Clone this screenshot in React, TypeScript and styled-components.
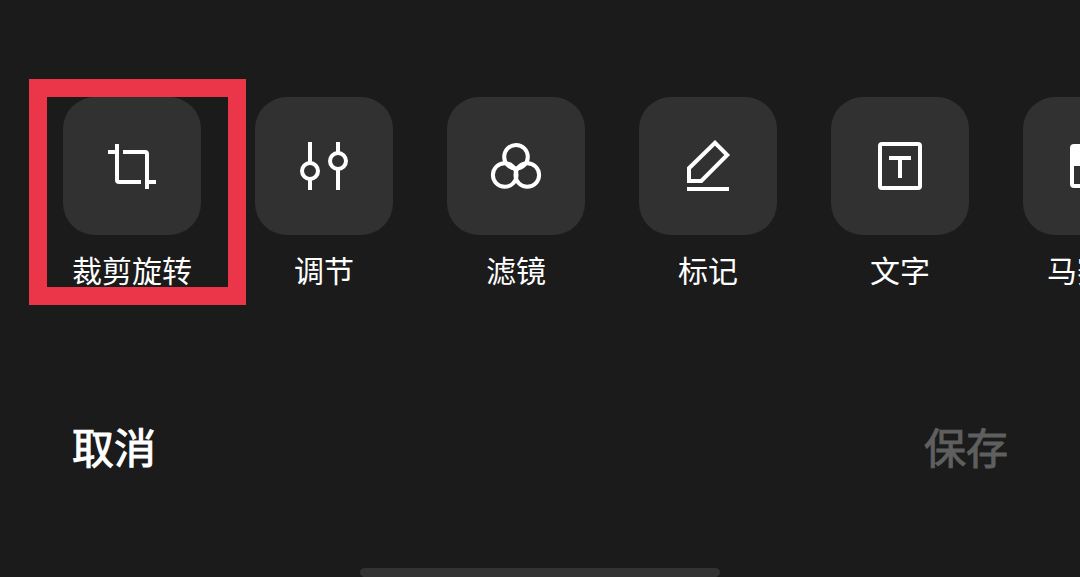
import React from "react";
import styled, { createGlobalStyle } from "styled-components";

const GlobalStyle = createGlobalStyle`
  *, *::before, *::after { box-sizing: border-box; }
  body {
    margin: 0;
    background: #1b1b1b;
    color: #fff;
    font-family: "Noto Sans CJK SC", "Noto Sans", sans-serif;
  }
`;

const Editor = styled.main`
  display: flex;
  flex-direction: column;
  overflow: hidden;
`;

const Toolbar = styled.nav`
  display: flex;
  gap: 54px;
  padding: 97px 63px 64px;
  overflow-x: auto;
  scrollbar-width: none;
`;

const Tool = styled.button`
  position: relative;
  flex: none;
  display: flex;
  flex-direction: column;
  align-items: center;
  gap: 16px;
  width: 138px;
  padding: 0;
  border: 0;
  background: none;
  color: inherit;
  font: inherit;
  cursor: pointer;
`;

const Tile = styled.span`
  display: flex;
  align-items: center;
  justify-content: center;
  width: 100%;
  aspect-ratio: 1;
  border-radius: 32px;
  background: #313131;
`;

const Label = styled.span`
  font-size: 30px;
  line-height: 36px;
  white-space: nowrap;
`;

const Highlight = styled.span`
  position: absolute;
  inset: -18px -45px -18px -34px;
  border: 18px solid #eb3549;
  pointer-events: none;
`;

const Icon = styled.svg`
  width: 64px;
  height: 64px;
  fill: none;
  stroke: #fff;
  stroke-width: 4;
`;

const Actions = styled.footer`
  display: flex;
  justify-content: space-between;
  padding: 65px 72px 92px;
`;

const Action = styled.button`
  padding: 0;
  border: 0;
  background: none;
  color: #fff;
  font: inherit;
  font-size: 42px;
  font-weight: 400;
  line-height: 60px;
  -webkit-text-stroke: 1px currentColor;
  cursor: pointer;

  &:disabled {
    color: #5f5f5f;
    cursor: default;
  }
`;

const HomeIndicator = styled.div`
  align-self: center;
  width: 33.3333%;
  height: 9px;
  border-radius: 5px;
  background: #333;
`;

const tools = [
  {
    label: "裁剪旋转",
    highlighted: true,
    icon: (
      <>
        <path d="M17 10V46a2 2 0 0 0 2 2H41M8 18H17" />
        <path d="M23 18H45a2 2 0 0 1 2 2V55M47 48H56" />
      </>
    ),
  },
  {
    label: "调节",
    icon: (
      <>
        <path d="M18 8V29M18 45V56M46 8V19M46 35V56" />
        <circle cx="18" cy="37" r="8" />
        <circle cx="46" cy="27" r="8" />
      </>
    ),
  },
  {
    label: "滤镜",
    icon: (
      <>
        <circle cx="32" cy="22.7" r="11.8" />
        <circle cx="20.7" cy="41" r="11.8" />
        <circle cx="43.3" cy="41" r="11.8" />
      </>
    ),
  },
  {
    label: "标记",
    icon: (
      <>
        <path d="M13 47V34.2L39 8.8L51.2 21L25.3 47Z" />
        <path d="M11 55H53" />
      </>
    ),
  },
  {
    label: "文字",
    icon: (
      <>
        <rect x="12" y="10" width="40" height="44" rx="2" />
        <path d="M21 24H43M32 24V44" />
      </>
    ),
  },
  {
    label: "马赛克",
    icon: (
      <>
        <rect x="12" y="12" width="40" height="40" rx="2" />
        <path d="M12 12H32V32H12ZM32 32H52V52H32Z" fill="#fff" stroke="none" />
      </>
    ),
  },
];

export default function App() {
  return (
    <>
      <GlobalStyle />
      <Editor>
        <Toolbar>
          {tools.map((tool) => (
            <Tool key={tool.label} type="button">
              <Tile>
                <Icon viewBox="0 0 64 64" aria-hidden="true">
                  {tool.icon}
                </Icon>
              </Tile>
              <Label>{tool.label}</Label>
              {tool.highlighted && <Highlight />}
            </Tool>
          ))}
        </Toolbar>
        <Actions>
          <Action type="button">取消</Action>
          <Action type="button" disabled>
            保存
          </Action>
        </Actions>
        <HomeIndicator />
      </Editor>
    </>
  );
}
